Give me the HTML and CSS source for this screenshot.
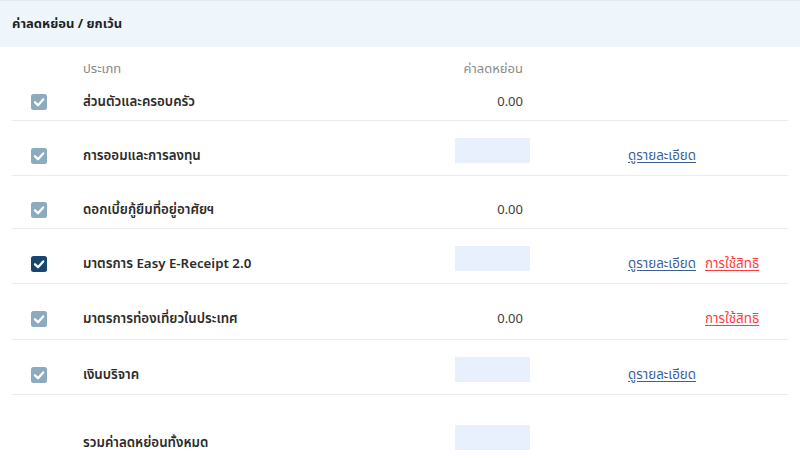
FILE: index.html
```html
<!DOCTYPE html>
<html lang="th">
<head>
<meta charset="utf-8">
<title>ค่าลดหย่อน / ยกเว้น</title>
<link rel="stylesheet" href="styles.css">
</head>
<body>
<section class="panel">
  <div class="panel-head">ค่าลดหย่อน / ยกเว้น</div>
  <div class="table">
    <div class="row colhead">
      <span></span>
      <span class="c-label">ประเภท</span>
      <span class="c-amount">ค่าลดหย่อน</span>
    </div>

    <div class="row first">
      <span class="c-check"><svg class="cb disabled" viewBox="0 0 16 16"><rect width="16" height="16" rx="2.5"/><polyline points="4,8.3 7,11.2 12.2,5.4"/></svg></span>
      <span class="c-label">ส่วนตัวและครอบครัว</span>
      <span class="c-amount">0.00</span>
    </div>

    <div class="row">
      <span class="c-check"><svg class="cb disabled" viewBox="0 0 16 16"><rect width="16" height="16" rx="2.5"/><polyline points="4,8.3 7,11.2 12.2,5.4"/></svg></span>
      <span class="c-label">การออมและการลงทุน</span>
      <span class="c-amount"><span class="box"></span></span>
      <span class="c-link1"><a class="link" href="#">ดูรายละเอียด</a></span>
    </div>

    <div class="row">
      <span class="c-check"><svg class="cb disabled" viewBox="0 0 16 16"><rect width="16" height="16" rx="2.5"/><polyline points="4,8.3 7,11.2 12.2,5.4"/></svg></span>
      <span class="c-label">ดอกเบี้ยกู้ยืมที่อยู่อาศัยฯ</span>
      <span class="c-amount">0.00</span>
    </div>

    <div class="row">
      <span class="c-check"><svg class="cb active" viewBox="0 0 16 16"><rect width="16" height="16" rx="2.5"/><polyline points="4,8.3 7,11.2 12.2,5.4"/></svg></span>
      <span class="c-label">มาตรการ Easy E-Receipt 2.0</span>
      <span class="c-amount"><span class="box"></span></span>
      <span class="c-link1"><a class="link" href="#">ดูรายละเอียด</a></span>
      <span class="c-link2"><a class="link red" href="#">การใช้สิทธิ</a></span>
    </div>

    <div class="row">
      <span class="c-check"><svg class="cb disabled" viewBox="0 0 16 16"><rect width="16" height="16" rx="2.5"/><polyline points="4,8.3 7,11.2 12.2,5.4"/></svg></span>
      <span class="c-label">มาตรการท่องเที่ยวในประเทศ</span>
      <span class="c-amount">0.00</span>
      <span class="c-link2 tall"><a class="link red" href="#">การใช้สิทธิ</a></span>
    </div>

    <div class="row">
      <span class="c-check"><svg class="cb disabled" viewBox="0 0 16 16"><rect width="16" height="16" rx="2.5"/><polyline points="4,8.3 7,11.2 12.2,5.4"/></svg></span>
      <span class="c-label">เงินบริจาค</span>
      <span class="c-amount"><span class="box"></span></span>
      <span class="c-link1"><a class="link" href="#">ดูรายละเอียด</a></span>
    </div>

    <div class="row total">
      <span class="c-check"></span>
      <span class="c-label">รวมค่าลดหย่อนทั้งหมด</span>
      <span class="c-amount"><span class="box"></span></span>
    </div>
  </div>
</section>
</body>
</html>
```

FILE: styles.css
```css
* { box-sizing: border-box; }

html, body {
  margin: 0;
  padding: 0;
  background: #ffffff;
}

body {
  font-family: "Noto Sans Thai", "Noto Sans", "Open Sans", sans-serif;
  font-size: 13px;
  color: #2b2b2b;
  overflow: hidden;
}

.panel {
  width: 800px;
}

.panel-head {
  height: 47px;
  background: #eef6fb;
  border-top: 1px solid #e2eaef;
  display: flex;
  align-items: center;
  padding-left: 12px;
  font-weight: 700;
  color: #1f1f1f;
  font-size: 13px;
}

.table {
  margin: 0 12px;
}

.row {
  display: grid;
  grid-template-columns: 71px 372px 75px 98px 77px 1fr;
  grid-auto-rows: minmax(37px, auto);
  align-items: center;
  padding-top: 15px;
  border-bottom: 1px solid #ebebeb;
  line-height: 18px;
}

.row.colhead {
  grid-auto-rows: auto;
  height: 32px;
  padding-top: 13px;
  align-items: start;
  border-bottom: none;
  color: #8a8a8a;
  font-weight: 400;
}

.row.first {
  grid-auto-rows: auto;
  height: 42px;
  padding-top: 4px;
}

.row.total {
  border-bottom: none;
  padding-top: 28px;
  grid-auto-rows: minmax(39px, auto);
}

.c-check {
  grid-column: 1;
  padding-left: 19px;
  display: flex;
  align-items: center;
}

.cb {
  width: 16px;
  height: 16px;
  display: block;
}

.cb polyline {
  fill: none;
  stroke: #ffffff;
  stroke-width: 2.3;
  stroke-linecap: round;
  stroke-linejoin: round;
}

.cb.disabled rect { fill: #8cabbf; }
.cb.active rect { fill: #17466f; }

.c-label {
  grid-column: 2;
  font-weight: 600;
  font-size: 13.3px;
  color: #2b2b2b;
}

.colhead .c-label,
.colhead .c-amount {
  font-weight: 400;
  font-size: 13px;
  color: #8a8a8a;
}

.c-amount {
  grid-column: 3;
  text-align: right;
  padding-right: 7px;
  color: #3d3d3d;
  display: flex;
  justify-content: flex-end;
}

.c-link1,
.c-link2 {
  min-height: 39px;
  display: flex;
  align-items: center;
}

.c-link2.tall {
  min-height: 40px;
}

.c-link1 { grid-column: 5; }
.c-link2 { grid-column: 6; }

.box {
  display: block;
  width: 75px;
  height: 25px;
  margin-right: -7px;
  margin-bottom: 11px;
  background: #e8f0fd;
}

.link {
  color: #3d5f99;
  font-size: 13.4px;
  text-decoration: underline;
  text-underline-offset: 2px;
  white-space: nowrap;
}

.link.red {
  color: #ff3d3d;
}
```
